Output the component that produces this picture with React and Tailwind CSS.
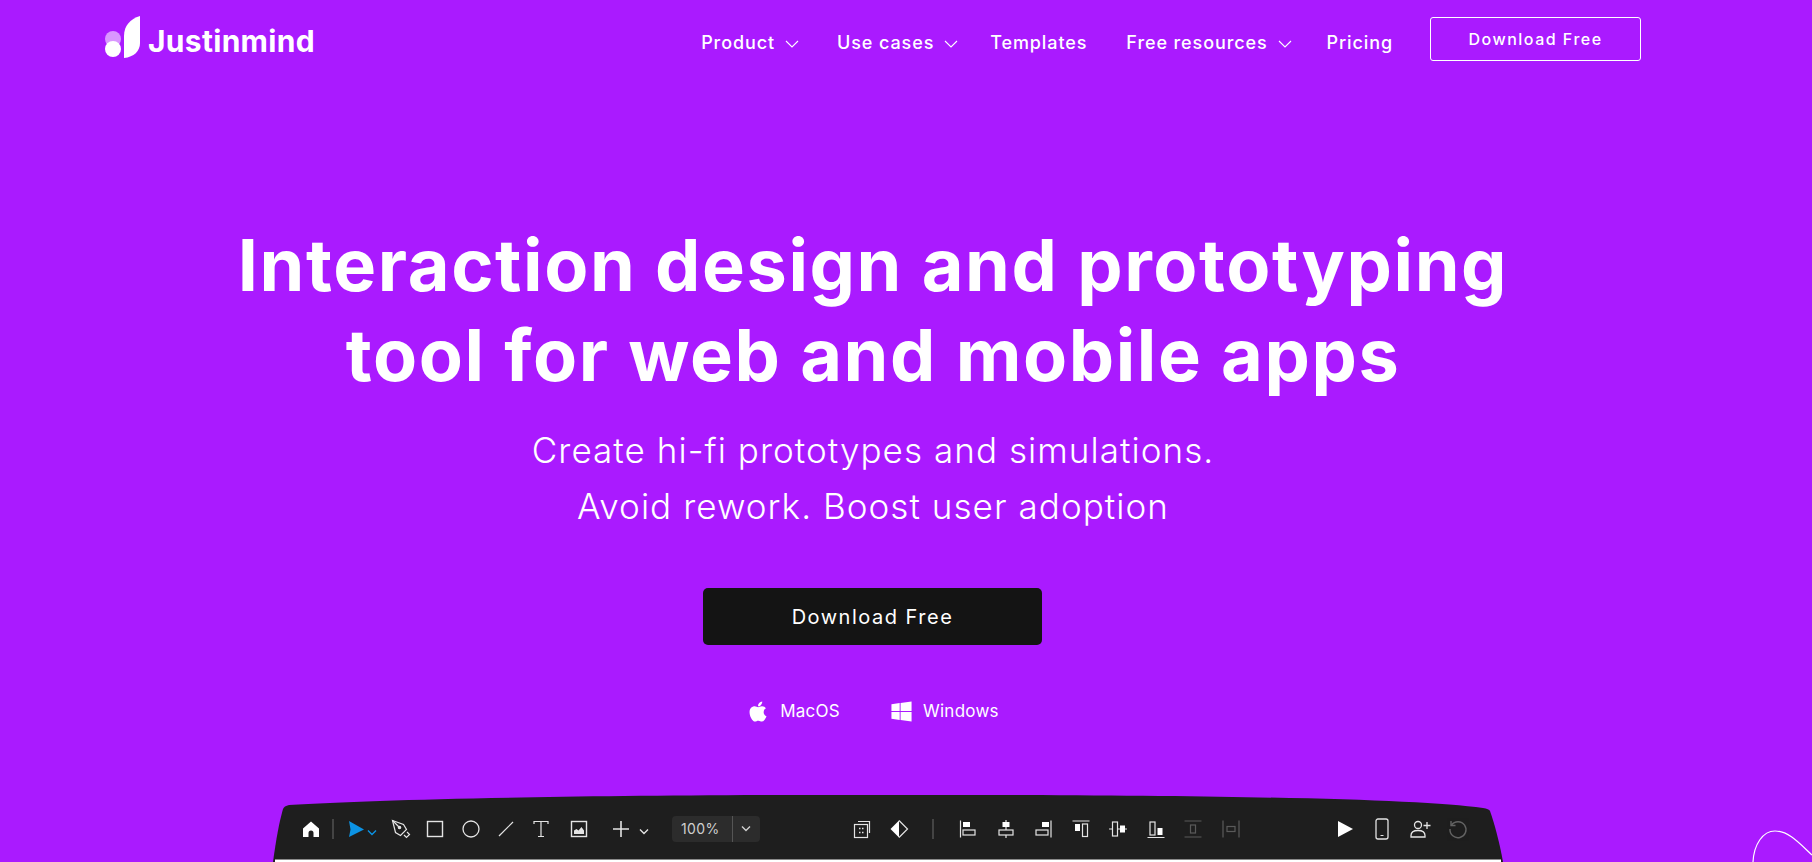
import { FaApple, FaWindows } from "react-icons/fa";

const Chevron = ({ className = "" }) => (
  <svg viewBox="0 0 14 8" className={className} fill="none" stroke="currentColor" strokeWidth="1.1">
    <path d="M1 1l6 6 6-6" />
  </svg>
);

const NavItem = ({ label, className = "", menu }) => (
  <a className={`flex items-center text-[18px] font-medium tracking-[0.9px] text-white ${className}`}>
    {label}
    {menu && <Chevron className="ml-[10px] mt-[3px] h-[8px] w-[14px]" />}
  </a>
);

const Logo = () => (
  <svg viewBox="0 0 36 42" className="h-[42px] w-[36px]">
    <circle cx="8" cy="23" r="8" fill="#fff" fillOpacity=".55" />
    <circle cx="8" cy="33" r="8" fill="#fff" />
    <path d="M35 0v27c0 8-6 14-16 15V20C19 10 25 3 35 0z" fill="#fff" />
  </svg>
);

const Icon = ({ children, className = "" }) => (
  <svg
    viewBox="0 0 24 24"
    fill="none"
    stroke="currentColor"
    strokeWidth="1.2"
    className={`h-6 w-6 shrink-0 text-[#e4e4e4] ${className}`}
  >
    {children}
  </svg>
);

const Sep = ({ className = "" }) => <div className={`h-[20px] w-[2px] shrink-0 bg-[#444] ${className}`} />;

const SmallChevron = ({ className = "" }) => (
  <svg viewBox="0 0 12 8" className={`h-[8px] w-[12px] shrink-0 ${className}`} fill="none" stroke="currentColor" strokeWidth="1.4">
    <path d="M2 1.5l4 4 4-4" />
  </svg>
);

const Toolbar = () => (
  <div className="ml-[273px] h-[67px] w-[1230px] bg-[#1e1e1e] pt-[21px] [clip-path:path('M0_67C3_45_6_28_10_14Q11_11_16_10C100_5_250_1_500_0L750_0C1000_1_1150_5_1210_13Q1216_14_1217_16C1222_30_1227_50_1230_67Z')]">
    <div className="flex h-[26px] items-center pl-[26px]">
      <Icon>
        <path d="M12 4.5L4 11.500v8.500h5.500v-4a2.500 2.500 0 015 0v4H20v-8.500z" fill="#fff" stroke="none" />
      </Icon>
      <Sep className="ml-[9px]" />
      <svg viewBox="0 0 20 20" className="ml-[12px] h-5 w-5 shrink-0">
        <path d="M3 2l15 8.5L3 18l1.500-7.500z" fill="#0c93e4" />
      </svg>
      <SmallChevron className="mt-[8px] text-[#0c93e4]" />
      <Icon className="ml-[10px]">
        <path d="M4.5 3.5l11 4 3 5-6 6-5-3z" />
        <path d="M4.5 3.5l6.5 6.5" />
        <circle cx="11.5" cy="10.5" r="1.2" fill="currentColor" />
        <path d="M16 18l2.5 2.5 3-3L19 15" />
      </Icon>
      <Icon className="ml-[11px]">
        <rect x="4.5" y="4.5" width="15" height="15" strokeWidth="1.4" />
      </Icon>
      <Icon className="ml-[12px]">
        <circle cx="12" cy="12" r="8" strokeWidth="1.3" />
      </Icon>
      <Icon className="ml-[11px]">
        <path d="M5 19L19 5" />
      </Icon>
      <Icon className="ml-[11px]">
        <path d="M5 7V4.500h14V7M12 4.500v15M9 19.500h6" />
      </Icon>
      <Icon className="ml-[14px]">
        <rect x="4.500" y="4.500" width="15" height="15" strokeWidth="1.4" />
        <path d="M7 17v-3.500l2.500-1.500 2 1.500 3-3.500 2.500 3.500V17z" fill="currentColor" stroke="none" />
      </Icon>
      <Icon className="ml-[18px]">
        <path d="M12 4v16M4 12h16" strokeWidth="1.6" />
      </Icon>
      <SmallChevron className="ml-[5px] mt-[6px] text-[#e4e4e4]" />
      <div className="ml-[22px] flex h-[26px] w-[88px] shrink-0 items-center rounded-[4px] bg-[#2c2c2c] text-[#cfcfcf]">
        <span className="w-[60px] pl-[9px] text-[14px] leading-none tracking-[0.4px]">100%</span>
        <div className="h-full w-px bg-[#555]" />
        <SmallChevron className="ml-[7px]" />
      </div>

      <Icon className="ml-[90px]">
        <rect x="4.500" y="7.500" width="13" height="13" strokeWidth="1.2" />
        <path d="M8 4.500h11.500V16" />
        <path d="M9 11.500h1.500M12 11.500h1.500M9 15.500h1.500M12 15.500h1.500" strokeWidth="1.6" />
      </Icon>
      <Icon className="ml-[13px]">
        <path d="M12 3.500L3.500 12l8.500 8.500z" fill="#fff" stroke="none" />
        <path d="M12 3.500l8.500 8.500-8.500 8.500" />
      </Icon>
      <Sep className="ml-[21px]" />
      <div className="ml-[22px] flex gap-[13.5px]">
        <Icon>
          <path d="M4.500 3.500v17" />
          <rect x="7" y="5" width="7" height="5" fill="#fff" stroke="none" />
          <rect x="7" y="13" width="12" height="5" />
        </Icon>
        <Icon>
          <path d="M12 3v18" />
          <rect x="8.500" y="5" width="7" height="5" fill="#fff" stroke="none" />
          <rect x="5" y="13" width="14" height="5" fill="#1e1e1e" />
        </Icon>
        <Icon>
          <path d="M20 3.500v17" />
          <rect x="11" y="5" width="7" height="5" fill="#fff" stroke="none" />
          <rect x="5" y="13" width="12" height="5" />
        </Icon>
        <Icon>
          <path d="M3.500 4h17" />
          <rect x="6" y="7" width="5" height="7" fill="#fff" stroke="none" />
          <rect x="13.500" y="7" width="5" height="12.500" />
        </Icon>
        <Icon>
          <path d="M3 12h18" />
          <rect x="6.500" y="5" width="5" height="14" fill="#1e1e1e" />
          <rect x="14" y="8.500" width="5" height="7" fill="#fff" stroke="none" />
        </Icon>
        <Icon>
          <path d="M3.500 20.500h17" />
          <rect x="6" y="5" width="5" height="13" />
          <rect x="13.500" y="11" width="5" height="7" fill="#fff" stroke="none" />
        </Icon>
        <Icon className="opacity-30">
          <path d="M3.500 4h17M3.500 20h17" />
          <rect x="9.500" y="8" width="5" height="8" />
        </Icon>
        <Icon className="opacity-30">
          <path d="M4 3.500v17M20 3.500v17" />
          <rect x="8" y="9.500" width="8" height="5" />
        </Icon>
      </div>

      <Icon className="ml-[90px]">
        <path d="M5 4l15 8-15 8z" fill="#fff" stroke="none" />
      </Icon>
      <Icon className="ml-[13px]">
        <rect x="6" y="2" width="12" height="20" rx="2" strokeWidth="1.3" />
        <path d="M10.500 18.500h3" />
      </Icon>
      <Icon className="ml-[14px]">
        <circle cx="10" cy="8" r="3.500" strokeWidth="1.3" />
        <path d="M3 20v-1.500C3 15 6 13.500 10 13.500s7 1.500 7 5V20z" strokeWidth="1.3" />
        <path d="M19 5v7M15.500 8.500h7" strokeWidth="1.3" />
      </Icon>
      <Icon className="ml-[14px] opacity-35">
        <path d="M5.500 8A8 8 0 1 1 4 12" strokeWidth="1.4" />
        <path d="M5 4v4.500h4.500" strokeWidth="1.4" />
      </Icon>
    </div>
    <div className="mx-[2px] mt-[17px] h-[3px] border-t border-[#8a8a8a] bg-white" />
  </div>
);

export default function App() {
  return (
    <div className="relative h-[862px] overflow-hidden bg-[#aa1aff] font-['Inter',sans-serif] text-white">
      <nav className="flex items-start pl-[105px] pr-[171px] pt-[16px]">
        <Logo />
        <span className="ml-[7px] mt-[9px] text-[30px] font-bold leading-[32px] tracking-[0.3px]">Justinmind</span>
        <div className="ml-auto flex items-start pt-[1px]">
          <div className="flex h-[50px] items-center">
            <NavItem label="Product" menu />
            <NavItem label="Use cases" menu className="ml-[38px]" />
            <NavItem label="Templates" className="ml-[32px]" />
            <NavItem label="Free resources" menu className="ml-[39px]" />
            <NavItem label="Pricing" className="ml-[35px]" />
          </div>
          <a className="ml-[37px] flex h-[44px] w-[211px] items-center justify-center rounded-[3px] border border-white text-[16px] font-medium tracking-[1.5px]">
            Download Free
          </a>
        </div>
      </nav>

      <main className="flex flex-col items-center pr-[66px]">
        <h1 className="mt-[153px] text-center text-[72px] font-bold leading-[90px] tracking-[1.6px]">
          Interaction design and prototyping
          <br />
          tool for web and mobile apps
        </h1>
        <p className="mt-[22px] text-center text-[35px] font-light leading-[56px] tracking-[1.05px]">
          Create hi-fi prototypes and simulations.
          <br />
          Avoid rework. Boost user adoption
        </p>
        <a className="mr-[1px] mt-[54px] flex h-[57px] w-[339px] items-center justify-center rounded-[5px] bg-[#141414] text-[20px] font-normal tracking-[1.5px]">
          Download Free
        </a>
        <div className="mt-[54px] flex items-center text-[17px] tracking-[0.25px]">
          <FaApple className="h-[23px] w-[22px]" />
          <span className="ml-[11px]">MacOS</span>
          <FaWindows className="ml-[50px] h-[23px] w-[23px]" />
          <span className="ml-[10px]">Windows</span>
        </div>
      </main>

      <div className="absolute inset-x-0 top-[795px]">
        <Toolbar />
      </div>

      <svg viewBox="0 0 64 32" className="absolute bottom-0 right-0 h-[32px] w-[64px]" fill="none" stroke="#fff" strokeWidth="1.2">
        <path d="M5 32C6 14 15 1 27 1c14 0 25 13 37 24" />
      </svg>
    </div>
  );
}
